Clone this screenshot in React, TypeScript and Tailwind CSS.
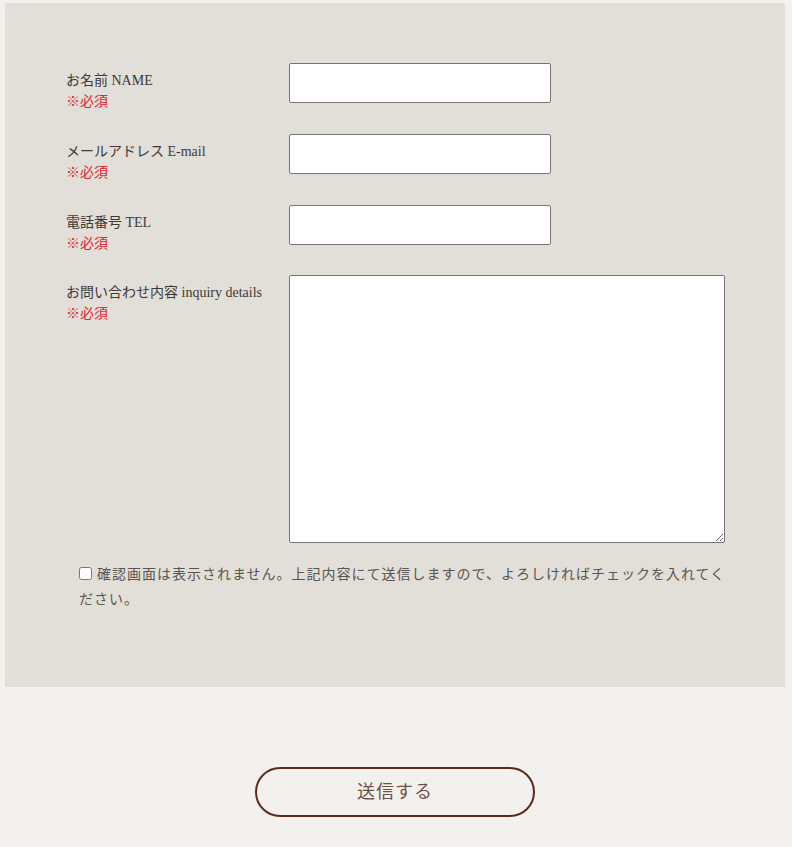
const fields = [
  { label: 'お名前 NAME', type: 'text' },
  { label: 'メールアドレス E-mail', type: 'email' },
  { label: '電話番号 TEL', type: 'tel' },
];

function Label({ text }: { text: string }) {
  return (
    <div className="h-[40px] w-[223px] shrink-0 pt-[7px] text-[14px] leading-[21px] text-[#3d3a37]">
      <div>{text}</div>
      <div className="text-[#e0262d]">※必須</div>
    </div>
  );
}

export default function App() {
  return (
    <div
      className="min-h-screen bg-[#f3f1ed] pt-[3px] pb-[30px]"
      style={{ fontFamily: '"Liberation Serif", "Noto Sans CJK JP", serif' }}
    >
      <form className="ml-[5px] w-[780px] bg-[#e2ded8] pl-[61px] pr-[60px] pt-[60px] pb-[75px]">
        {fields.map((f) => (
          <div key={f.label} className="mb-[31px] flex items-start">
            <Label text={f.label} />
            <input
              type={f.type}
              className="h-[40px] w-[262px] rounded-[2px] border border-[#767676] bg-white px-2 outline-none"
            />
          </div>
        ))}
        <div className="-mt-px flex items-start">
          <Label text="お問い合わせ内容 inquiry details" />
          <textarea className="h-[268px] w-[436px] rounded-[2px] border border-[#767676] bg-white p-2 outline-none" />
        </div>

        <label className="mt-[19px] -mr-[8px] block pl-[13px] text-[14px] leading-[25px] tracking-[1px] text-[#5a5550]">
          <input type="checkbox" className="mr-[5px] h-[13px] w-[13px] align-[-1px]" />
          確認画面は表示されません。上記内容にて送信しますので、よろしければチェックを入れてください。
        </label>
      </form>

      <div className="mt-[80px] flex justify-center pr-[2px]">
        <button
          type="button"
          className="h-[50px] w-[280px] rounded-full border-2 border-[#5c2a1c] text-[18px] tracking-[1px] text-[#6b5148]"
        >
          送信する
        </button>
      </div>
    </div>
  );
}
